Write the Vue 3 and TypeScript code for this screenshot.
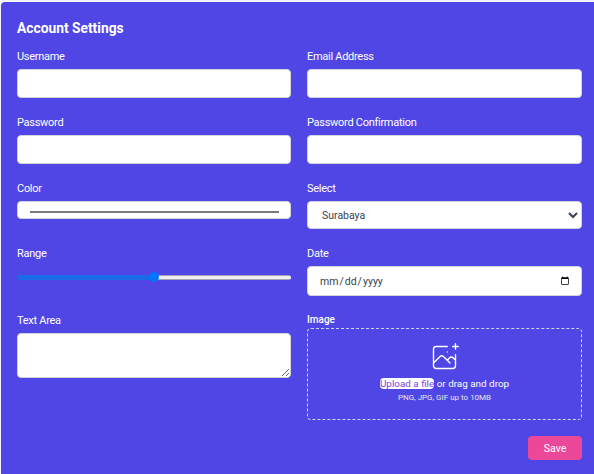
<script setup lang="ts">
import { ref } from 'vue';

const username = ref('');
const email = ref('');
const password = ref('');
const passwordConfirmation = ref('');
const color = ref('#000000');
const city = ref('Surabaya');
const range = ref(50);
const date = ref('');
const message = ref('');

const cities = ['Surabaya', 'Jakarta', 'Tangerang', 'Bandung'];
</script>

<template>
  <section class="panel">
    <h1 class="title">Account Settings</h1>
    <form class="fields" @submit.prevent>
      <div class="field">
        <label for="username">Username</label>
        <input id="username" v-model="username" class="control" type="text">
      </div>
      <div class="field">
        <label for="email">Email Address</label>
        <input id="email" v-model="email" class="control" type="email">
      </div>
      <div class="field">
        <label for="password">Password</label>
        <input id="password" v-model="password" class="control" type="password">
      </div>
      <div class="field">
        <label for="confirmation">Password Confirmation</label>
        <input id="confirmation" v-model="passwordConfirmation" class="control" type="password">
      </div>
      <div class="field">
        <label for="color">Color</label>
        <input id="color" v-model="color" class="control color" type="color">
      </div>
      <div class="field">
        <label for="select">Select</label>
        <select id="select" v-model="city" class="control select">
          <option v-for="item in cities" :key="item">{{ item }}</option>
        </select>
      </div>
      <div class="field">
        <label for="range">Range</label>
        <input id="range" v-model="range" class="range" type="range" min="0" max="100">
      </div>
      <div class="field">
        <label for="date">Date</label>
        <input id="date" v-model="date" class="control date" type="date">
      </div>
      <div class="field">
        <label for="textarea">Text Area</label>
        <textarea id="textarea" v-model="message" class="control textarea"></textarea>
      </div>
      <div class="field">
        <span class="image-label">Image</span>
        <div class="dropzone">
          <svg class="upload-icon" viewBox="0 0 48 48" fill="none" stroke="currentColor" aria-hidden="true">
            <path
              d="M28 8H12a4 4 0 00-4 4v20m32-12v8m0 0v8a4 4 0 01-4 4H12a4 4 0 01-4-4v-4m32-4l-3.172-3.172a4 4 0 00-5.656 0L28 28M8 32l9.172-9.172a4 4 0 015.656 0L28 28m0 0l4 4m4-24h8m-4-4v8m-12 4h.02"
              stroke-width="2"
              stroke-linecap="round"
              stroke-linejoin="round"
            />
          </svg>
          <p class="drop-text"><span class="upload-link">Upload a file</span> or drag and drop</p>
          <p class="drop-hint">PNG, JPG, GIF up to 10MB</p>
        </div>
      </div>
    </form>
    <div class="actions">
      <button class="save" type="submit">Save</button>
    </div>
  </section>
</template>

<style>
html,
body {
  margin: 0;
  background: #f3f4f6;
}
</style>

<style scoped>
.panel {
  box-sizing: border-box;
  height: 472px;
  margin: 2px 0 0 1px;
  padding: 16px 12px 0 16px;
  overflow: hidden;
  font-family: Roboto, Lato, sans-serif;
  color: #fff;
  background: #4f46e5;
  border-radius: 4px 0 0;
}

.title {
  margin: 0 0 10px;
  font-size: 13.8px;
  font-weight: 700;
  line-height: 20px;
}

.fields {
  display: grid;
  grid-template-columns: 274px 275px;
  gap: 16px;
}

.field label {
  display: block;
  padding-top: 1px;
  margin-bottom: 4px;
  font-size: 11px;
  line-height: 16px;
  letter-spacing: -0.28px;
}

.control {
  box-sizing: border-box;
  display: block;
  width: 100%;
  height: 29px;
  margin: 0;
  background: #fff;
  border: 1px solid #d1d5db;
  border-radius: 4px;
  outline: none;
}

.color {
  height: 18px;
  padding: 7px 9px 5px 10px;
}

.color::-webkit-color-swatch {
  border: 1px solid #7b7b7b;
}

.select {
  height: 28px;
  padding: 0 10px;
  font-family: inherit;
  font-size: 10.5px;
  color: #374151;
}

.date {
  height: 30px;
  padding: 0 11px;
  font-family: inherit;
  font-size: 10.5px;
  color: #374151;
}

.date::-webkit-calendar-picker-indicator {
  margin-right: -2px;
}

.textarea {
  height: 45px;
  padding: 6px 12px;
}

.range {
  display: block;
  width: 274px;
  height: 22px;
  margin: 0;
  appearance: none;
  background: transparent;
}

.range::-webkit-slider-runnable-track {
  height: 5px;
  background:
    linear-gradient(to right, #1a6be8 50%, transparent 50%),
    linear-gradient(#a5a5b5 1px, #efefef 1px, #efefef 4px, #a5a5b5 4px);
  border-radius: 3px;
}

.range::-webkit-slider-thumb {
  width: 10px;
  height: 10px;
  margin-top: -2.5px;
  appearance: none;
  background: #0075ff;
  border-radius: 50%;
}

.image-label {
  display: block;
  padding-top: 1px;
  margin-bottom: 1px;
  font-size: 10px;
  font-weight: 500;
  line-height: 14px;
}

.dropzone {
  box-sizing: border-box;
  display: flex;
  flex-direction: column;
  align-items: center;
  height: 92px;
  padding-top: 12px;
  border: 1px dashed #d1d5db;
  border-radius: 4px;
}

.upload-icon {
  display: block;
  width: 33px;
  height: 33px;
}

.drop-text {
  margin: 3px 0 0;
  font-size: 9.9px;
  font-weight: 400;
  line-height: 14px;
}

.upload-link {
  color: #7c3aed;
  background: #fff;
  border-radius: 4px;
}

.drop-hint {
  margin: 0;
  font-size: 8px;
  line-height: 14px;
  color: #e5e7eb;
}

.actions {
  display: flex;
  justify-content: flex-end;
  margin-top: 16px;
}

.save {
  width: 54px;
  height: 24px;
  padding: 0;
  font-family: inherit;
  font-size: 10.5px;
  color: #fff;
  background: #ec4899;
  border: none;
  border-radius: 4px;
}
</style>
